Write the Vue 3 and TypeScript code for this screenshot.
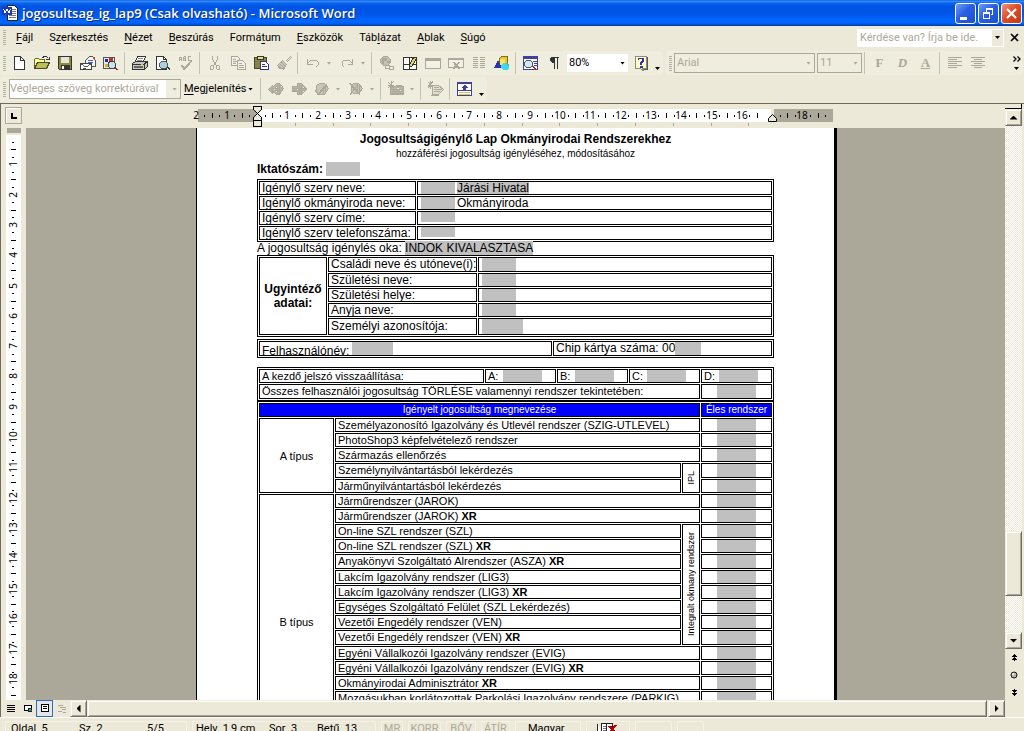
<script setup lang="ts">
import { computed } from 'vue'

type Shape = { d: string; f?: string; s?: string }

const G = '#aca899'
const K = '#333333'
const N = '#4040a0'

const icons: Record<string, Shape[]> = {
  doc: [{ d: 'M3.5 1.5h6l4 4v9h-10z', f: '#fff', s: K }, { d: 'M9.5 1.5v4h4', s: K }],
  open: [
    { d: 'M.5 13.5v-9l1-1h3l1 1h5v3', f: '#ffff9c', s: '#6b6b30' },
    { d: 'M.5 13.5l3-6h12l-3 6z', f: '#bdbd5a', s: '#4a4a20' },
    { d: 'M8.5 2.5l2-1h2l2 2M12 4.5h3v-3', s: K },
  ],
  save: [
    { d: 'M1.5 1.5h13v13h-12l-1-1z', f: '#8c8c39', s: K },
    { d: 'M4 2h8v6h-8z', f: '#e4e4dc' },
    { d: 'M4 10h9v4h-9z', f: K },
    { d: 'M5 11h2v3h-2z', f: '#fff' },
  ],
  mail: [
    { d: 'M5.5 5.5l4-4h3l3 4v6h-10z', f: '#f4f4f4', s: '#555' },
    { d: 'M8 5h5M8 7h5', s: '#4a63c8' },
    { d: 'M.5 8.5h11v6h-11z', f: '#fff', s: '#444' },
    { d: 'M1 9l5 3 5-3M3 13h3', s: '#555' },
    { d: 'M13 2h2v2h-2z', f: '#d24a2a' },
  ],
  find: [
    { d: 'M.5 2.5h11v11h-11z', f: '#e8e8e8', s: '#555' },
    { d: 'M2 4h3v3h-3z', f: '#222c9c' },
    { d: 'M6 3h4v3h-4z', f: '#c03028' },
    { d: 'M2 9h3v3h-3z', f: '#d8b020' },
    { d: 'M6.5 6.5h4l2 2v3l-2 2h-3l-2-2v-3z', f: '#bfe4f4', s: '#444' },
    { d: 'M12 12l3 3M12 13l2 2', s: '#b02020' },
  ],
  print: [
    { d: 'M5.5 1.5h8l-2 5h-8z', f: '#fff', s: K },
    { d: 'M6 3h5M5 5h5', s: '#888' },
    { d: 'M.5 8.5l3-2h12v5l-3 3h-12z', f: '#c8c8c0', s: K },
    { d: 'M1 9.5h11l3-3M12.5 10v4', s: K },
    { d: 'M2 11h9v2h-9z', f: '#666' },
    { d: 'M9 9h2v1h-2z', f: '#e8d020' },
  ],
  preview: [
    { d: 'M1.5 1.5h7l3 3v10h-10z', f: '#fff', s: K },
    { d: 'M8.5 1.5v3h3', s: K },
    { d: 'M6.5 6.5h4l2 2v3l-2 2h-4l-2-2v-3z', f: '#a9d2de', s: '#555' },
    { d: 'M12 12l3 3M13 12l2 2', s: K },
  ],
  spell: [
    { d: 'M1.500 6v-4h2v4M1.500 4.500h2M5.500 1.500v4.500M5.500 1.500h2v4h-2M5.500 3.500h2M12.500 1.500h-2.500v4h2.500', s: G },
    { d: 'M3 10l3 4 8-8M4 10l2 3 8-8M4 11l2 4 8-9', s: G },
  ],
  cut: [
    { d: 'M5.500 1v3l3 6M10.500 1v3l-3 6', s: G },
    { d: 'M4.500 10.500h2v3l-1 1h-2v-3zM9.500 10.500h2l1 1v3h-2l-1-1z', s: G },
  ],
  copy: [
    { d: 'M1.500 1.500h6l2 2v7h-8z', f: '#f3f1e5', s: G },
    { d: 'M3 4.500h3M3 6.500h5M3 8.500h3', s: G },
    { d: 'M7.500 5.500h5l3 3v6h-8z', f: '#f3f1e5', s: G },
    { d: 'M9 8.500h3M9 10.500h5M9 12.500h5', s: G },
  ],
  paste: [
    { d: 'M1.500 2.500h12v11h-12z', f: '#84844a', s: '#4a4a20' },
    { d: 'M4.500 1.500h6v3h-6z', f: '#f0e070', s: K },
    { d: 'M7.500 6.500h5l3 3v5h-8z', f: '#fff', s: '#31318c' },
    { d: 'M9 9.500h3M9 11.500h5', s: '#31318c' },
  ],
  brush: [
    { d: 'M14.500 1.500l-5 5M15.500 2.500l-5 5', s: G },
    { d: 'M6.500 5.500l4 4-3 5-6-4z', f: '#c9c5b6', s: G },
    { d: 'M3 8l5 5M5 7l4 4M2 12l3 2', s: G },
  ],
  undo: [{ d: 'M2.500 4v5h5M3 8l3-3h5l2 2v3l-2 2', s: G }],
  redo: [{ d: 'M13.500 4v5h-5M13 8l-3-3h-5l-2 2v3l2 2', s: G }],
  link: [
    { d: 'M4.500 1.500h4l3 3v3l-3 3h-4l-3-3v-3z', f: '#c6c2b3', s: G },
    { d: 'M3 3h5v3h-3v3h-2zM8 6h3v2h-3z', f: G },
    { d: 'M6.500 10.500h4v3h-4zM10.500 11.500h4v3h-4z', f: '#efeddd', s: G },
  ],
  grid: [
    { d: 'M1.500 2.500h13v12h-13z', f: '#fff', s: K },
    { d: 'M7.500 2v13M1 9.500h14', s: K },
    { d: 'M7 10l5-8 3 1-5 8-3 1z', f: '#e0d860', s: K },
  ],
  table: [{ d: 'M.500 3.500h15v10h-15z', f: '#f3f1e5', s: G }, { d: 'M1 3h14v3h-14z', f: G }],
  excel: [
    { d: 'M.500 3.500h15v9h-15z', f: '#f3f1e5', s: G },
    { d: 'M1 3h14v2h-14z', f: G },
    { d: 'M5 7l6 7M11 7l-6 7M6 7l6 7M12 7l-6 7', s: G },
  ],
  cols: [{ d: 'M2 2.500h5M2 4.500h5M2 6.500h5M2 8.500h5M2 10.500h5M2 12.500h5M9 2.500h5M9 4.500h5M9 6.500h5M9 8.500h5M9 10.500h5M9 12.500h5', s: G }],
  draw: [
    { d: 'M5.500 3.500l2-2h6v7l-2 2h-6z', f: '#e8c830', s: '#806c18' },
    { d: 'M6 4h5v6h-5z', f: '#ffe45a' },
    { d: 'M0 13l4-8 4 8z', f: '#3030b0' },
    { d: 'M9 8h4l2 2v3l-2 2h-4l-2-2v-3z', f: '#38dcec' },
    { d: 'M12 8h2l1 2v2z', f: '#8c9c9c' },
  ],
  map: [
    { d: 'M.500 1.500h14v13h-14z', f: '#fff', s: N },
    { d: 'M0 1h15v3h-15z', f: N },
    { d: 'M10 6.500h4M11 8.500h3M11 10.500h3', s: N },
    { d: 'M3.500 5.500h4l2 2v3l-2 2h-4l-2-2v-3z', f: '#c6ecf4', s: '#555' },
    { d: 'M9 11l4 4M10 11l4 4', s: '#b03030' },
  ],
  para: [{ d: 'M6 2h7v1h-1v11h-1v-11h-2v11h-1v-6h-2l-2-2v-3z', f: K }],
  help: [
    { d: 'M2.500 1.500h11v12h-4l2 3-4-3h-5z', f: '#ffffc4', s: '#8c8c7c' },
    { d: 'M14.500 2v12h-4', s: '#555' },
    { d: 'M5.500 5v-2h5v3l-2 2v2M9.500 3v3l-2 2v2M7 12.500h3M7 11.500h3', s: '#3030b0' },
  ],
  back: [
    { d: 'M.500 8.500l4-4 1 1 3-3h3l4 5-4 6h-3l-3-3-1 2z', f: '#bab6a7', s: G },
    { d: 'M3 7.500h9M3 9.500h9M9.500 4v9M11.500 4v9', s: G },
    { d: 'M13 5h1v1h-1zM6 8h1v1h-1zM8 6h1v1h-1zM8 10h1v1h-1z', f: '#efeddd' },
  ],
  next: [
    { d: 'M1.500 5.500h5v-3h4l5 5.500-5 5.500h-4v-3h-5z', f: '#bab6a7', s: G },
    { d: 'M2 7.500h12M2 9.500h12M8.500 4v9M10.500 4v9', s: G },
    { d: 'M6 8h1v1h-1zM12 6h1v1h-1zM12 10h1v1h-1z', f: '#efeddd' },
  ],
  accept: [
    { d: 'M2.500 4.500l3-2h5l4 5-4 6h-5l-3-3z', f: '#cac6b7', s: G },
    { d: 'M1 9l3 5 9-10M2 9l2 4 9-10M9.500 5v8M11.500 5v7', s: G },
  ],
  reject: [
    { d: 'M3.500 4.500l2-2h5l4 5-4 5h-5l-2-2z', f: '#cac6b7', s: G },
    { d: 'M1 2l11 12M2 14l9-12M2 2l10 11M9.500 5v8M11.500 5v7', s: G },
  ],
  note: [
    { d: 'M2.500 5.500h13v8h-13z', f: '#bab6a7', s: G },
    { d: 'M0 1l6 6M6 0l-6 7M3 0v8M0 4h6M8 4.500h6M4 8.500h11M4 10.500h11M4 12.500h11', s: G },
    { d: 'M9 7h2v1h-2zM12 9h1v1h-1z', f: '#efeddd' },
  ],
  track: [
    { d: 'M4.500 4.500h6l5 4-5 5h-6z', f: '#e2dfcf', s: G },
    { d: 'M0 1l5 6M5 0l-5 7M2.500 0v8M0 4h6M6 6.500h5M6 8.500h8M6 10.500h6M3 14.500h8', s: G },
  ],
  pane: [
    { d: 'M.500 1.500h14v13h-14z', f: '#fff', s: N },
    { d: 'M0 1h15v2h-15z', f: N },
    { d: 'M7 4h1l3 3h-2v2h5v1h-13v-1h5v-2h-2z', f: N },
    { d: 'M2 11.500h11M2 13.500h11', s: '#d8c850' },
  ],
  left: [{ d: 'M1 2.500h14M1 4.500h9M1 6.500h14M1 8.500h9M1 10.500h14M1 12.500h9', s: G }],
  center: [{ d: 'M1 2.500h14M4 4.500h8M1 6.500h14M4 8.500h8M1 10.500h14M4 12.500h8', s: G }],
  viewNormal: [{ d: 'M4 4.500h8M4 6.500h8M4 8.500h8M4 10.500h8', s: '#000' }],
  viewWeb: [
    { d: 'M4.500 4.500h7v5h-7z', f: '#fff', s: '#000' },
    { d: 'M8 7h4v4h-4z', f: '#222' },
    { d: 'M9 8h2v2h-2z', f: '#48b048' },
    { d: 'M10 9h2v1h-2z', f: '#2858d8' },
  ],
  viewPrint: [{ d: 'M4.500 3.500h7v7h-7z', f: '#fff', s: '#000' }, { d: 'M6 5.500h4M6 7.500h4', s: '#000' }],
  viewOutline: [{ d: 'M4 4.500h5M6 6.500h6M8 8.500h4M4 10.500h4M9 11.500h3', s: G }],
}

type Tool = { icon?: string; label?: string; sep?: boolean; drop?: boolean }
const standardTools: Tool[] = [
  { icon: 'doc', label: 'Új' }, { icon: 'open', label: 'Megnyitás' }, { icon: 'save', label: 'Mentés' },
  { icon: 'mail', label: 'E-mail' }, { icon: 'find', label: 'Keresés' }, { sep: true },
  { icon: 'print', label: 'Nyomtatás' }, { icon: 'preview', label: 'Nyomtatási kép' }, { icon: 'spell', label: 'Helyesírás' }, { sep: true },
  { icon: 'cut', label: 'Kivágás' }, { icon: 'copy', label: 'Másolás' }, { icon: 'paste', label: 'Beillesztés' }, { icon: 'brush', label: 'Formátummásoló' }, { sep: true },
  { icon: 'undo', label: 'Visszavonás', drop: true }, { icon: 'redo', label: 'Ismét', drop: true }, { sep: true },
  { icon: 'link', label: 'Hivatkozás' }, { icon: 'grid', label: 'Táblázatok és szegélyek' }, { icon: 'table', label: 'Táblázat beszúrása' },
  { icon: 'excel', label: 'Excel munkalap' }, { icon: 'cols', label: 'Hasábok' }, { icon: 'draw', label: 'Rajz' }, { sep: true },
  { icon: 'map', label: 'Dokumentumtérkép' }, { icon: 'para', label: 'Minden látszik' },
]
const reviewTools: Tool[] = [
  { sep: true }, { icon: 'back', label: 'Előző' }, { icon: 'next', label: 'Következő' },
  { icon: 'accept', label: 'Elfogadás', drop: true }, { icon: 'reject', label: 'Elvetés', drop: true }, { sep: true },
  { icon: 'note', label: 'Új megjegyzés', drop: true }, { sep: true }, { icon: 'track', label: 'Korrektúra' }, { sep: true },
  { icon: 'pane', label: 'Véleményezőablak' },
]

const menus: [string, string, string][] = [
  ['', 'F', 'ájl'], ['S', 'z', 'erkesztés'], ['', 'N', 'ézet'], ['', 'B', 'eszúrás'], ['Formá', 't', 'um'],
  ['', 'E', 'szközök'], ['Táb', 'l', 'ázat'], ['', 'A', 'blak'], ['', 'S', 'úgó'],
]

const views = [
  { icon: 'viewNormal', label: 'Normál nézet' },
  { icon: 'viewWeb', label: 'Webes elrendezés' },
  { icon: 'viewPrint', label: 'Nyomtatási elrendezés' },
  { icon: 'viewOutline', label: 'Vázlat nézet' },
]

/* One centimetre on either ruler at the current zoom */
const CM = 30.3
const hTicks = computed(() => {
  const out: { x: number; k: string; n?: number }[] = []
  for (let q = -8; q <= 75; q++) {
    if (q === 0 || (q > 66 && q < 69)) continue
    const x = Math.round(61 + (q * CM) / 4)
    if (q % 4 === 0) out.push({ x, k: 'n', n: Math.abs(q / 4) })
    else out.push({ x, k: q % 2 === 0 ? 'l' : 'd' })
  }
  return out
})
const tabStops = Array.from({ length: 13 }, (_, i) => Math.round(61 + (i + 1) * 37.8))
const vTicks = computed(() => {
  const out: { y: number; k: string; n?: number }[] = []
  for (let q = 1; q < 75; q++) {
    const y = Math.round(6 + (q * CM) / 4)
    if (q % 4 === 0) out.push({ y, k: 'n', n: q / 4 })
    else out.push({ y, k: q % 2 === 0 ? 'l' : 'd' })
  }
  return out
})

type Row = { t: string; xr?: boolean; tall?: boolean; last?: boolean; head?: string; span?: number; side?: string; sideSpan?: number; narrow?: boolean }
const rows: Row[] = [
  { t: 'Személyazonosító Igazolvány és Utlevél rendszer (SZIG-UTLEVEL)', head: 'A típus', span: 5 },
  { t: 'PhotoShop3 képfelvételező rendszer' },
  { t: 'Származás ellenőrzés' },
  { t: 'Személynyilvántartásból lekérdezés', narrow: true, side: 'IPL', sideSpan: 2, tall: true },
  { t: 'Járműnyilvántartásból lekérdezés', narrow: true },
  { t: 'Járműrendszer (JAROK)', head: 'B típus', span: 14 },
  { t: 'Járműrendszer (JAROK)', xr: true },
  { t: 'On-line SZL rendszer (SZL)', narrow: true, side: 'Integralt okmany rendszer', sideSpan: 8 },
  { t: 'On-line SZL rendszer (SZL)', xr: true, narrow: true },
  { t: 'Anyakönyvi Szolgáltató Alrendszer (ASZA)', xr: true, narrow: true, tall: true },
  { t: 'Lakcím Igazolvány rendszer (LIG3)', narrow: true },
  { t: 'Lakcím Igazolvány rendszer (LIG3)', xr: true, narrow: true },
  { t: 'Egységes Szolgáltató Felület (SZL Lekérdezés)', narrow: true },
  { t: 'Vezetői Engedély rendszer (VEN)', narrow: true },
  { t: 'Vezetői Engedély rendszer (VEN)', xr: true, narrow: true, tall: true },
  { t: 'Egyéni Vállalkozói Igazolvány rendszer (EVIG)' },
  { t: 'Egyéni Vállalkozói Igazolvány rendszer (EVIG)', xr: true },
  { t: 'Okmányirodai Adminisztrátor', xr: true },
  { t: 'Mozgásukban korlátozottak Parkolási Igazolvány rendszere (PARKIG)', last: true },
]
</script>

<template>
  <div class="word">
    <header class="titlebar">
      <svg class="app" viewBox="0 0 16 16" shape-rendering="crispEdges" aria-hidden="true">
        <path d="M5.500 .5h7l3 3v12h-10z" fill="#fff" stroke="#222" />
        <path d="M9 4.500h5M9 6.500h5M9 8.500h5M7 10.500h7M7 12.500h7" stroke="#777" />
        <path d="M0 2h10v8h-10z" fill="#2038b0" />
        <path d="M1.500 4l1.500 4 2-4 2 4 1.500-4" fill="none" stroke="#fff" />
      </svg>
      <h1>jogosultsag_ig_lap9 (Csak olvasható) - Microsoft Word</h1>
      <button class="win" aria-label="Kis méret"><svg viewBox="0 0 19 19"><path d="M4 13h7v3h-7z" fill="#fff" /></svg></button>
      <button class="win" aria-label="Előző méret"><svg viewBox="0 0 19 19" shape-rendering="crispEdges"><path d="M7.500 8v-3.500h6v6h-2M4.500 8.500h6v6h-6zM4 9h7M7 5h7" fill="none" stroke="#fff" /></svg></button>
      <button class="win close" aria-label="Bezárás"><svg viewBox="0 0 19 19"><path d="M5 5l9 9M14 5l-9 9" stroke="#fff" stroke-width="2.200" /></svg></button>
    </header>

    <nav class="menubar">
      <span class="grip"></span>
      <button v-for="m in menus" :key="m[1] + m[2]" class="menu">{{ m[0] }}<u>{{ m[1] }}</u>{{ m[2] }}</button>
      <div class="ask">
        <input type="text" aria-label="Kérdés" placeholder="Kérdése van? Írja be ide." />
        <button aria-label="Korábbi kérdések"><i class="tri"></i></button>
      </div>
      <button class="docclose" aria-label="Dokumentum bezárása"><svg viewBox="0 0 9 9"><path d="M1 1l7 7M8 1l-7 7" stroke="#000" stroke-width="1.700" /></svg></button>
    </nav>

    <div class="bars">
      <div class="bar">
        <span class="grip"></span>
        <template v-for="(t, i) in standardTools" :key="i">
          <span v-if="t.sep" class="sep"></span>
          <button v-else class="tool" :class="{ wide: t.drop }" :aria-label="t.label">
            <svg viewBox="0 0 16 16" shape-rendering="crispEdges"><path v-for="(p, j) in icons[t.icon!]" :key="j" :d="p.d" :fill="p.f || 'none'" :stroke="p.s || 'none'" /></svg>
            <i v-if="t.drop" class="tri dim"></i>
          </button>
        </template>
        <label class="combo zoom"><select aria-label="Nagyítás"><option>80%</option></select><i class="tri"></i></label>
        <button class="tool" aria-label="Súgó">
          <svg viewBox="0 0 16 16" shape-rendering="crispEdges"><path v-for="(p, j) in icons.help" :key="j" :d="p.d" :fill="p.f || 'none'" :stroke="p.s || 'none'" /></svg>
        </button>
        <button class="more" aria-label="Eszköztár beállításai"><i class="tri"></i></button>
      </div>
      <div class="bar format">
        <span class="grip"></span>
        <label class="combo flat font"><select aria-label="Betűtípus" disabled><option>Arial</option></select><i class="tri dim"></i></label>
        <label class="combo flat size"><select aria-label="Betűméret" disabled><option>11</option></select><i class="tri dim"></i></label>
        <span class="sep"></span>
        <button class="tool letter" disabled><b>F</b></button>
        <button class="tool letter" disabled><b><em>D</em></b></button>
        <button class="tool letter" disabled><b><u>A</u></b></button>
        <span class="sep"></span>
        <button v-for="a in ['left', 'center']" :key="a" class="tool" :aria-label="a === 'left' ? 'Balra zárt' : 'Középre zárt'" disabled>
          <svg viewBox="0 0 16 16" shape-rendering="crispEdges"><path v-for="(p, j) in icons[a]" :key="j" :d="p.d" fill="none" :stroke="p.s" /></svg>
        </button>
        <button class="more end" aria-label="További gombok"><svg viewBox="0 0 8 6"><path d="M.500 .5l2.500 2.500-2.500 2.500M4.500 .5l2.500 2.500-2.500 2.500" fill="none" stroke="#000" stroke-width="1.300" /></svg><i class="tri"></i></button>
      </div>
    </div>

    <div class="bars second">
      <div class="bar">
        <span class="grip"></span>
        <label class="combo flat review"><select aria-label="Megjelenítés véleményezéshez" disabled><option>Végleges szöveg korrektúrával</option></select><i class="tri dim"></i></label>
        <button class="show"><span><u>M</u>egjelenítés</span><i class="tri"></i></button>
        <template v-for="(t, i) in reviewTools" :key="i">
          <span v-if="t.sep" class="sep"></span>
          <button v-else class="tool" :class="{ wide: t.drop }" :aria-label="t.label">
            <svg viewBox="0 0 16 16" shape-rendering="crispEdges"><path v-for="(p, j) in icons[t.icon!]" :key="j" :d="p.d" :fill="p.f || 'none'" :stroke="p.s || 'none'" /></svg>
            <i v-if="t.drop" class="tri dim"></i>
          </button>
        </template>
        <button class="more" aria-label="Eszköztár beállításai"><i class="tri"></i></button>
      </div>
    </div>

    <div class="work">
      <div class="corner"><button aria-label="Tabulátor"><svg viewBox="0 0 7 7" shape-rendering="crispEdges"><path d="M0 0h2v5h5v2h-7z" /></svg></button></div>
      <div class="hruler">
        <svg class="hscale" viewBox="0 0 641 25" shape-rendering="crispEdges">
          <rect x="2" y="6" width="59" height="13" fill="#aca899" />
          <rect x="61" y="6" width="514" height="13" fill="#fff" />
          <rect x="578" y="6" width="59" height="13" fill="#aca899" />
          <template v-for="t in hTicks" :key="t.x">
            <text v-if="t.k === 'n'" :x="t.x" y="16" text-anchor="middle">{{ t.n }}</text>
            <rect v-else-if="t.k === 'l'" :x="t.x" y="10" width="1" height="5" />
            <rect v-else :x="t.x" y="12" width="1" height="2" />
          </template>
          <rect v-for="x in tabStops" :key="'t' + x" :x="x" y="20" width="1" height="3" fill="#aca899" />
          <path d="M57.500 3.500h8v3l-4 4 4 4v9h-8v-9l4-4-4-4zM57 17.500h9" fill="#ece9d8" stroke="#000" />
          <path d="M572.500 18.500v-3l4-4 4 4v3z" fill="#ece9d8" stroke="#000" shape-rendering="auto" />
        </svg>
      </div>
      <div class="vruler">
        <svg viewBox="0 0 15 572" preserveAspectRatio="xMidYMin slice" shape-rendering="crispEdges">
          <rect y="0" x="1" width="14" height="5" fill="#aca899" />
          <rect y="7" width="15" height="565" fill="#fff" />
          <template v-for="t in vTicks" :key="t.y">
            <text v-if="t.k === 'n'" text-anchor="middle" :transform="`translate(11 ${t.y}) rotate(-90)`">{{ t.n }}</text>
            <rect v-else-if="t.k === 'l'" :y="t.y" x="5" height="1" width="5" />
            <rect v-else :y="t.y" x="6" height="1" width="2" />
          </template>
        </svg>
      </div>

      <main class="desk">
        <article class="page">
          <h2>Jogosultságigénylő Lap Okmányirodai Rendszerekhez</h2>
          <p class="sub">hozzáférési jogosultság igényléséhez, módosításához</p>
          <p class="iktato"><b>Iktatószám:</b><span class="fld w34"></span></p>

          <table>
            <colgroup><col class="c157" /><col /></colgroup>
            <tbody>
              <tr><th>Igénylő szerv neve:</th><td><div class="line"><span class="fld w34"></span><mark>Járási Hivatal</mark></div></td></tr>
              <tr><th>Igénylő okmányiroda neve:</th><td><div class="line"><span class="fld w34"></span><span>Okmányiroda</span></div></td></tr>
              <tr><th>Igénylő szerv címe:</th><td><div class="line"><span class="fld w34 short"></span></div></td></tr>
              <tr><th>Igénylő szerv telefonszáma:</th><td><div class="line"><span class="fld w34 short"></span></div></td></tr>
            </tbody>
          </table>
          <p class="oka">A jogosultság igénylés oka: <mark>INDOK KIVALASZTASA</mark></p>

          <table>
            <colgroup><col class="c68" /><col class="c149" /><col /></colgroup>
            <tbody>
              <tr class="tall"><th rowspan="5" class="clerk">Ugyintéző<br />adatai:</th><th>Családi neve és utóneve(i):</th><td><div class="line"><span class="fld w34"></span></div></td></tr>
              <tr><th>Születési neve:</th><td><div class="line"><span class="fld w34"></span></div></td></tr>
              <tr><th>Születési helye:</th><td><div class="line"><span class="fld w34"></span></div></td></tr>
              <tr><th>Anyja neve:</th><td><div class="line"><span class="fld w34"></span></div></td></tr>
              <tr class="taller"><th>Személyi azonosítója:</th><td><div class="line"><span class="fld w41"></span></div></td></tr>
            </tbody>
          </table>

          <table class="user">
            <colgroup><col class="c293" /><col /></colgroup>
            <tbody>
              <tr class="tall">
                <td><div class="clip"><span>Felhasználónév:</span><span class="fld w41"></span></div></td>
                <td><div class="chip"><span>Chip kártya száma: 00</span><span class="fld w26"></span></div></td>
              </tr>
            </tbody>
          </table>

          <table class="small reset">
            <colgroup><col class="c225" /><col class="c71" /><col class="c71" /><col class="c71" /><col class="c71" /></colgroup>
            <tbody>
              <tr><th>A kezdő jelszó visszaállítása:</th><td v-for="l in ['A:', 'B:', 'C:', 'D:']" :key="l"><div class="opt"><span>{{ l }}</span><span class="fld w39"></span></div></td></tr>
              <tr class="tall"><th colspan="4">Összes felhasználói jogosultság TÖRLÉSE valamennyi rendszer tekintetében:</th><td><div class="mid"><span class="fld w39"></span></div></td></tr>
            </tbody>
          </table>

          <table class="small">
            <colgroup><col class="c75" /><col /><col class="c18" /><col class="c71" /></colgroup>
            <thead><tr><th colspan="3">Igényelt jogosultság megnevezése</th><th>Éles rendszer</th></tr></thead>
            <tbody>
              <tr v-for="(r, i) in rows" :key="i" :class="{ tall: r.tall, last: r.last }">
                <th v-if="r.head" :rowspan="r.span" class="kind">{{ r.head }}</th>
                <td :colspan="r.narrow ? 1 : 2" class="name">{{ r.t }}<b v-if="r.xr">&nbsp;XR</b></td>
                <th v-if="r.side" :rowspan="r.sideSpan" class="side"><span>{{ r.side }}</span></th>
                <td><div class="mid"><span class="fld w39"></span></div></td>
              </tr>
            </tbody>
          </table>
        </article>
      </main>

      <aside class="vscroll">
        <span class="split"></span>
        <button class="sb" aria-label="Fel"><i class="tri up"></i></button>
        <div class="track"><span class="before"></span><span class="thumb"></span><span class="after"></span></div>
        <button class="sb" aria-label="Le"><i class="tri big"></i></button>
        <button class="jump" aria-label="Előző oldal"><svg viewBox="0 0 7 8" shape-rendering="crispEdges"><path d="M3 0h1v1h1v1h1v1h-2v1h1v1h1v1h-2v1h-1v-1h-2v-1h1v-1h1v-1h-2v-1h1v-1h1z" /></svg></button>
        <button class="jump" aria-label="Böngészés"><svg viewBox="0 0 8 8"><circle cx="4" cy="4" r="3" fill="#b8b8b0" stroke="#111" /><circle cx="3" cy="3" r="1" fill="#fff" /></svg></button>
        <button class="jump" aria-label="Következő oldal"><svg class="flip" viewBox="0 0 7 8" shape-rendering="crispEdges"><path d="M3 0h1v1h1v1h1v1h-2v1h1v1h1v1h-2v1h-1v-1h-2v-1h1v-1h1v-1h-2v-1h1v-1h1z" /></svg></button>
      </aside>

      <div class="hscroll">
        <button v-for="v in views" :key="v.icon" class="view" :class="{ on: v.icon === 'viewPrint' }" :aria-label="v.label">
          <svg viewBox="0 0 16 16" shape-rendering="crispEdges"><path v-for="(p, j) in icons[v.icon]" :key="j" :d="p.d" :fill="p.f || 'none'" :stroke="p.s || 'none'" /></svg>
        </button>
        <button class="sb" aria-label="Balra"><i class="tri lt"></i></button>
        <span class="thumb"></span>
        <button class="sb" aria-label="Jobbra"><i class="tri rt"></i></button>
      </div>
    </div>

    <footer class="status">
      <div class="cell s1"><span>Oldal&nbsp; 5</span><span>Sz. 2</span><span>5/5</span></div>
      <div class="cell s2"><span>Helv. 1,9 cm</span><span>Sor&nbsp; 3</span><span>Betű&nbsp; 13</span></div>
      <button class="cell m1">MR</button>
      <button class="cell m2">KORR</button>
      <button class="cell m3">BŐV</button>
      <button class="cell m4">ÁTÍR</button>
      <div class="cell s3">Magyar</div>
      <div class="cell s4">
        <svg viewBox="0 0 22 14" shape-rendering="crispEdges"><path d="M1.500 2v10h9v-10l-2-1h-3v10M10.500 2l2-1h4v10h-5" fill="#fff" stroke="#222" /><path d="M7 4h3M7 6h3M7 8h3" stroke="#777" /><path d="M13 4l7 8M20 3l-8 9M14 4l7 8" stroke="#b00000" stroke-width="2" /></svg>
      </div>
      <div class="cell s5"></div>
      <div class="cell s6"></div>
    </footer>
  </div>
</template>

<style>
html,
body {
  margin: 0;
  overflow: hidden;
}
</style>

<style scoped>
.word {
  display: flex;
  flex-direction: column;
  height: 100vh;
  overflow: hidden;
  background: #ece9d8;
  color: #000;
  font: 11px/14px Roboto, "Noto Sans", sans-serif;
}
button,
input,
select {
  font: inherit;
  color: inherit;
  border: 0;
  padding: 0;
  margin: 0;
  background: none;
  appearance: none;
  opacity: 1;
}
svg {
  display: block;
  flex: none;
}

.titlebar {
  flex: none;
  display: flex;
  align-items: center;
  height: 26px;
  padding: 0 2px;
  gap: 2px;
  background: linear-gradient(#0a4fd0 0, #3a92ff 1px, #0a66f0 3px, #0054e3 6px, #0056e8 14px, #0066ff 20px, #0066ff 23px, #0048c0 25px, #0038a0);
}
.app {
  width: 16px;
  height: 16px;
}
h1 {
  flex: 1;
  margin: 0 0 0 2px;
  color: #fff;
  font: 600 13px/20px "Open Sans", "Noto Sans", sans-serif;
  text-shadow: 1px 1px 0 #0a2a80;
  white-space: nowrap;
}
.win {
  box-sizing: border-box;
  width: 21px;
  height: 21px;
  border: 1px solid #fff;
  border-radius: 3px;
  background: linear-gradient(135deg, #6f9bf4, #2a5fe2 45%, #1c4fd0);
}
.win.close {
  background: linear-gradient(135deg, #f0957a, #dd4d28 45%, #c03a14);
}
.win svg {
  width: 19px;
  height: 19px;
}

.menubar {
  flex: none;
  display: flex;
  align-items: center;
  box-sizing: border-box;
  height: 25px;
  padding: 0 5px 2px 3px;
}
.grip {
  flex: none;
  width: 3px;
  height: 15px;
  background: repeating-linear-gradient(#b5b2a2 0 1px, transparent 1px 2px);
}
.menu {
  padding: 0 8px;
  line-height: 20px;
}
.menu u,
.show u {
  text-underline-offset: 2px;
}
.grip + .menu {
  margin-left: 2px;
}
.ask {
  display: flex;
  width: 147px;
  height: 18px;
  margin: 0 6px 0 auto;
  padding: 1px;
  box-sizing: border-box;
  background: #fff;
}
.ask input {
  flex: 1;
  min-width: 0;
  padding-left: 2px;
}
.ask input::placeholder {
  color: #aca899;
  opacity: 1;
}
.ask button {
  display: grid;
  place-items: center;
  width: 11px;
  background: #ece9d8;
}
.docclose svg {
  width: 9px;
  height: 9px;
}

.tri {
  flex: none;
  width: 5px;
  height: 3px;
  background: #000;
  clip-path: polygon(0 0, 100% 0, 50% 100%);
}
.tri.dim {
  background: #aca899;
}
.tri.big,
.tri.up {
  width: 8px;
  height: 4px;
}
.tri.up {
  clip-path: polygon(50% 0, 100% 100%, 0 100%);
}
.tri.lt,
.tri.rt {
  width: 4px;
  height: 8px;
}
.tri.lt {
  clip-path: polygon(100% 0, 100% 100%, 0 50%);
}
.tri.rt {
  clip-path: polygon(0 0, 100% 50%, 0 100%);
}

.bars {
  flex: none;
  display: flex;
  gap: 3px;
  height: 24px;
  padding-right: 1px;
}
.bars.second {
  height: 26px;
  margin-top: 2px;
  align-items: flex-start;
}
.bar {
  display: flex;
  align-items: center;
  height: 24px;
  padding-left: 3px;
  border-radius: 3px;
  background: #efeddd;
}
.bar .grip {
  margin-right: 1px;
}
.bar.format {
  flex: 1;
}
.tool {
  display: flex;
  align-items: center;
  justify-content: center;
  width: 23px;
  height: 22px;
}
.tool svg {
  width: 16px;
  height: 16px;
}
.tool.wide {
  width: 34px;
  gap: 6px;
}
.sep {
  flex: none;
  width: 1px;
  height: 22px;
  margin: 0 3px 0 2px;
  background: #c5c2b2;
}
.combo {
  display: flex;
  align-items: center;
  box-sizing: border-box;
  height: 18px;
  padding-right: 3px;
  background: #fff;
}
.combo select {
  flex: 1;
  min-width: 0;
  padding-left: 2px;
}
.combo.flat {
  height: 20px;
  border: 1px solid #aca899;
  background: transparent;
  color: #aca899;
}
.combo.zoom {
  width: 61px;
  margin: 0 1px 0 2px;
}
.combo.font {
  width: 141px;
  margin: 0 2px 0 1px;
}
.combo.size {
  width: 45px;
}
.combo.review {
  width: 172px;
  margin: 0 3px 0 2px;
}
.combo.review select {
  padding-left: 0;
  background: #fff;
  margin-right: 6px;
  line-height: 18px;
}
.letter {
  color: #aca899;
  font: 13px/20px "Liberation Serif", serif;
}
.more {
  display: flex;
  align-items: flex-end;
  justify-content: center;
  width: 11px;
  height: 14px;
}
.more.end {
  flex-direction: column;
  align-items: center;
  gap: 5px;
  margin-left: auto;
  margin-right: 1px;
}
.more.end svg {
  width: 8px;
  height: 6px;
}
.show {
  display: flex;
  align-items: center;
  justify-content: space-between;
  width: 74px;
  height: 22px;
  padding-right: 5px;
  box-sizing: border-box;
}

.work {
  flex: 1;
  min-height: 0;
  display: grid;
  grid-template-columns: 25px 1fr 19px;
  grid-template-rows: 24px 1fr 17px;
  border-top: 1px solid #6f6c5f;
  border-left: 1px solid #6f6c5f;
}
.corner {
  padding: 3px 0 0 4px;
}
.corner button {
  display: grid;
  place-items: center;
  box-sizing: border-box;
  width: 17px;
  height: 17px;
  border: 1px solid #aca899;
  box-shadow: inset 1px 1px #fff;
}
.corner svg {
  width: 6px;
  height: 6px;
}
.hruler {
  padding-left: 2px;
}
.hscale {
  width: 641px;
  height: 25px;
  margin: -1px auto 0;
  overflow: visible;
}
.hscale text,
.vruler text {
  font: 10px "Noto Sans", sans-serif;
}
.vruler {
  padding: 0 0 0 5px;
  overflow: hidden;
}
.vruler svg {
  width: 15px;
  height: 100%;
}

.desk {
  grid-column: 2;
  grid-row: 2;
  overflow: hidden;
  padding-left: 2px;
  background: #aca899;
}
.page {
  box-sizing: border-box;
  width: 641px;
  margin: 0 auto;
  padding: 3px 60px 0;
  border-left: 1px solid #000;
  border-right: 3px solid #000;
  background: #fff;
  font: 12px/12px "Liberation Sans", Arial, sans-serif;
}
h2,
p {
  margin: 0;
}
h2 {
  font-size: 12px;
  line-height: 16px;
  text-align: center;
}
.sub {
  font-size: 10px;
  line-height: 13px;
  text-align: center;
}
.iktato {
  display: flex;
  align-items: center;
  gap: 3px;
  height: 14px;
  margin: 2px 0 3px;
}
.iktato .fld {
  height: 14px;
}
table {
  width: 100%;
  table-layout: fixed;
  border: 1px solid #000;
  border-spacing: 1px;
}
td,
th {
  box-sizing: border-box;
  height: 14px;
  padding: 0;
  border: 1px solid #000;
  vertical-align: top;
  text-align: left;
  font-weight: normal;
  white-space: nowrap;
}
th {
  padding-left: 2px;
}
.tall > td,
.tall > th {
  height: 15px;
}
.taller > td,
.taller > th {
  height: 17px;
  line-height: 15px;
}
.last > .name {
  height: 58px;
}
.last .mid {
  height: 56px;
}
.c157 { width: 157px; }
.c68 { width: 68px; }
.c149 { width: 149px; }
.c293 { width: 293px; }
.c225 { width: 225px; }
.c71 { width: 71px; }
.c75 { width: 75px; }
.c18 { width: 18px; }
.fld {
  flex: none;
  align-self: stretch;
  background: #c0c0c0;
}
.w26 { width: 26px; }
.w34 { width: 34px; }
.w39 { width: 39px; }
.w41 { width: 41px; }
mark {
  background: #c0c0c0;
  color: inherit;
}
.line {
  display: flex;
  height: 12px;
  gap: 2px;
  padding-left: 3px;
}
.tall .line {
  height: 13px;
}
.taller .line {
  height: 15px;
}
.fld.short {
  height: 10px;
}
.oka {
  height: 13px;
  white-space: nowrap;
}
th.clerk {
  padding: 0;
  font-weight: bold;
  line-height: 14px;
  text-align: center;
  vertical-align: middle;
}
.user {
  margin-top: 2px;
}
.clip,
.chip {
  display: flex;
  gap: 3px;
  height: 13px;
  padding-left: 2px;
  overflow: hidden;
  line-height: 13px;
}
.clip {
  line-height: 18px;
}
.chip {
  gap: 0;
}
.reset {
  margin-top: 9px;
}
.small {
  font-size: 11px;
}
.opt {
  display: flex;
  justify-content: space-between;
  height: 12px;
  padding: 0 13px 0 2px;
}
.mid {
  display: flex;
  height: 12px;
  padding-left: 15px;
}
.tall .mid {
  height: 13px;
}
thead th {
  padding: 0;
  background: #0000ff;
  color: #fff;
  font-size: 10px;
  text-align: center;
}
.name {
  padding-left: 2px;
}
th.kind {
  padding: 0;
  text-align: center;
  vertical-align: middle;
}
th.side {
  padding: 0;
  font-size: 9px;
  text-align: center;
  vertical-align: middle;
}
.side span {
  display: block;
  margin: 0 auto;
  width: 12px;
  height: max-content;
  writing-mode: vertical-rl;
  transform: rotate(180deg);
}

.vscroll {
  grid-column: 3;
  grid-row: 1 / 4;
  display: flex;
  flex-direction: column;
  padding-right: 2px;
}
.split {
  flex: none;
  height: 5px;
  box-sizing: border-box;
  border-bottom: 1px solid #000;
  border-right: 1px solid #000;
}
.sb,
.thumb {
  box-sizing: border-box;
  border: 1px solid #716f64;
  border-left-color: #f1efe2;
  border-top-color: #f1efe2;
  background: #ece9d8;
  box-shadow: inset 1px 1px #fff, inset -1px -1px #aca899;
}
.sb {
  display: grid;
  place-items: center;
  flex: none;
  width: 17px;
  height: 17px;
}
.track {
  flex: 1;
  display: flex;
  flex-direction: column;
  background: repeating-conic-gradient(#fff 0 25%, #ece9d8 0 50%) 0 0 / 2px 2px;
}
.track .before { flex: 407; }
.track .thumb { flex: 63; }
.track .after { flex: 36; }
.jump {
  display: grid;
  place-items: center;
  height: 17px;
}
.jump:last-child {
  margin-bottom: 17px;
}
.jump svg {
  width: 8px;
  height: 8px;
}
.flip {
  transform: rotate(180deg);
}
.hscroll {
  grid-column: 1 / 3;
  grid-row: 3;
  display: flex;
  padding-left: 1px;
}
.hscroll .thumb {
  flex: 1;
  margin-right: 1px;
}
.view {
  display: grid;
  place-items: center;
  width: 17px;
  height: 17px;
}
.view svg {
  width: 16px;
  height: 16px;
}
.view.on {
  box-sizing: border-box;
  border: 1px solid #316ac5;
  background: #e1e6e8;
}

.status {
  flex: none;
  display: flex;
  gap: 5px;
  height: 14px;
  padding: 3px 0 0 5px;
  box-sizing: border-box;
  border-top: 1px solid #fff;
  overflow: hidden;
  line-height: 14px;
}
.cell {
  flex: none;
  display: flex;
  box-sizing: border-box;
  height: 19px;
  border: 1px solid #f4f2e6;
  white-space: nowrap;
}
button.cell {
  justify-content: center;
  color: #aca899;
}
.s1 span,
.s2 span {
  flex: none;
}
.s1 { width: 182px; padding-left: 5px; }
.s1 span { width: 68px; }
.s2 { width: 184px; padding-left: 3px; }
.s2 span { width: 73px; }
.s2 span + span { width: 48px; }
.m1 { width: 22px; }
.m2 { width: 33px; }
.m3 { width: 30px; }
.m4 { width: 29px; }
.s3 { width: 66px; padding-left: 12px; }
.s4 { width: 44px; padding-left: 9px; }
.s4 svg { width: 22px; height: 14px; }
.s5 { width: 37px; }
.s6 { width: 27px; }
</style>
